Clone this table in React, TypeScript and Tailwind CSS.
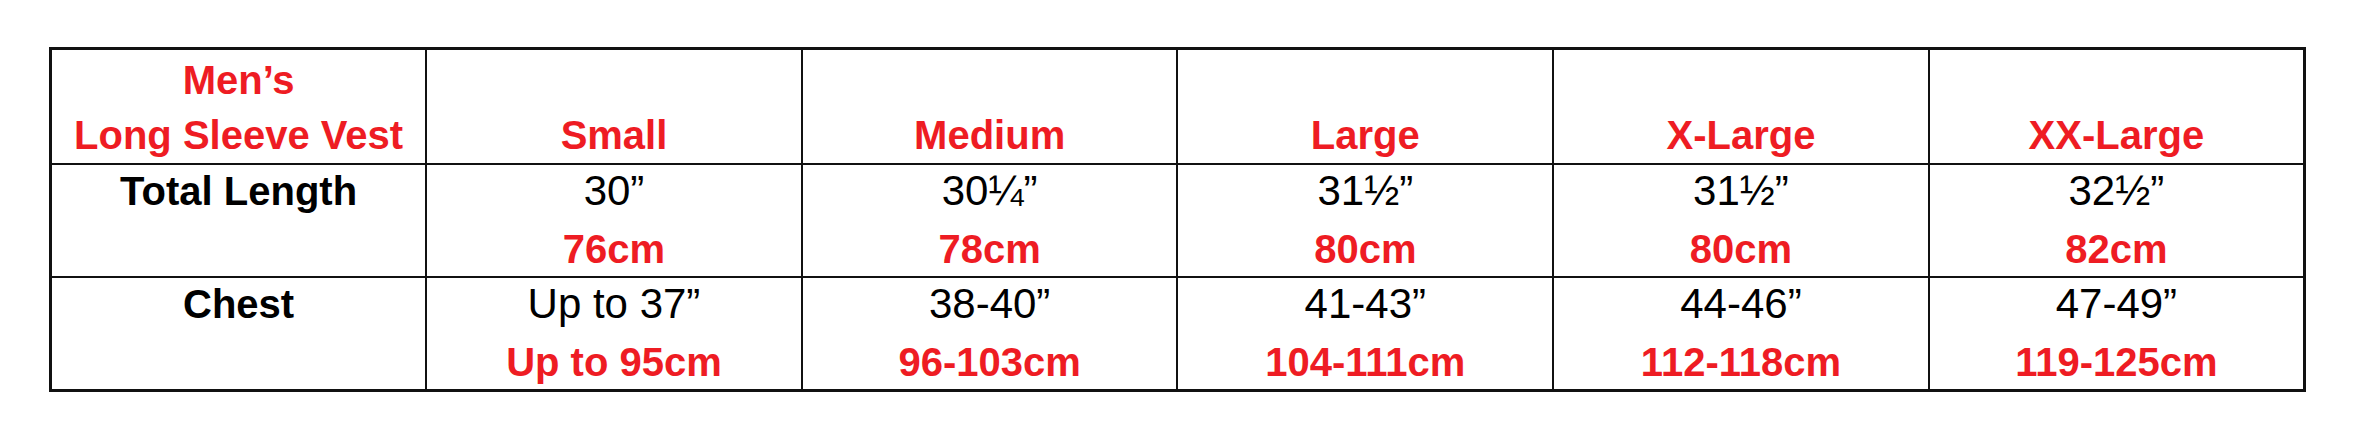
const sizes = ['Small', 'Medium', 'Large', 'X-Large', 'XX-Large'];

const rows = [
  {
    label: 'Total Length',
    values: [
      ['30\u201D', '76cm'],
      ['30\u00BC\u201D', '78cm'],
      ['31\u00BD\u201D', '80cm'],
      ['31\u00BD\u201D', '80cm'],
      ['32\u00BD\u201D', '82cm'],
    ],
    height: 'h-[113px]',
  },
  {
    label: 'Chest',
    values: [
      ['Up to 37\u201D', 'Up to 95cm'],
      ['38-40\u201D', '96-103cm'],
      ['41-43\u201D', '104-111cm'],
      ['44-46\u201D', '112-118cm'],
      ['47-49\u201D', '119-125cm'],
    ],
    height: 'h-[114px]',
  },
];

export default function App() {
  return (
    <div className="w-[2355px] h-[444px] bg-white pt-[47px] pl-[49px] font-['Liberation_Sans',Arial,sans-serif]">
      <table className="w-[2257px] table-fixed border-collapse border-[3px] border-[#111]">
        <tbody>
          {/* header */}
          <tr className="h-[115px]">
            <td className="p-0 border-2 border-[#111] align-bottom text-center text-[40px] leading-[55px] font-bold text-[#ee1c23]">
              Men&rsquo;s
              <br />
              Long Sleeve Vest
            </td>
            {sizes.map((s) => (
              <td
                key={s}
                className="p-0 border-2 border-[#111] align-bottom text-center text-[40px] leading-[55px] font-bold text-[#ee1c23]"
              >
                {s}
              </td>
            ))}
          </tr>

          {rows.map((row) => (
            <tr key={row.label} className={row.height}>
              <td className="p-0 border-2 border-[#111] align-top text-center text-[40px] leading-[52px] font-bold text-black">
                {row.label}
              </td>
              {row.values.map(([inch, cm], i) => (
                <td key={i} className="p-0 border-2 border-[#111] align-top text-center">
                  <div className="text-[42px] leading-[52px] text-black">{inch}</div>
                  <div className="mt-[6px] text-[40px] leading-[52px] font-bold text-[#ee1c23]">{cm}</div>
                </td>
              ))}
            </tr>
          ))}
        </tbody>
      </table>
    </div>
  );
}
